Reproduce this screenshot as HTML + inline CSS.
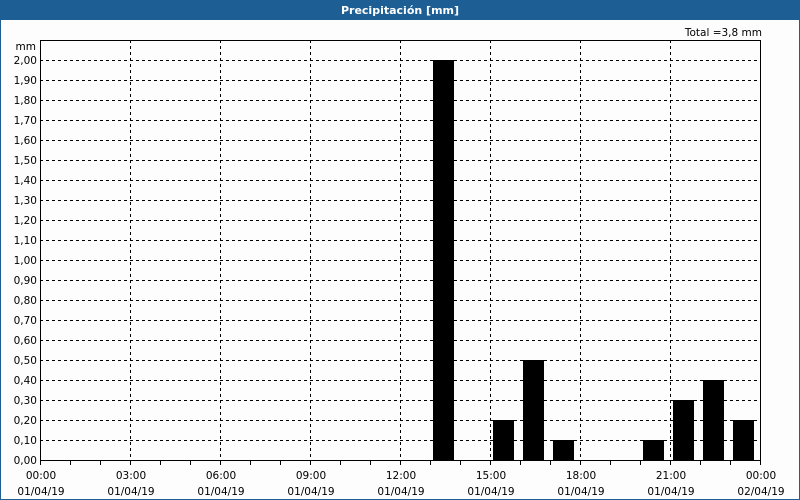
<!DOCTYPE html>
<html><head><style>
body{margin:0;width:800px;height:500px;overflow:hidden;background:#fff}
svg{display:block}
text{font-family:"DejaVu Sans","Liberation Sans",sans-serif;font-size:10.5px;fill:#000}
</style></head><body>
<svg width="800" height="500" xmlns="http://www.w3.org/2000/svg">
<rect x="0" y="0" width="800" height="500" fill="#1d5f95"/>
<rect x="1" y="20" width="798" height="479" fill="#fdfdfd"/>
<text x="400" y="14" text-anchor="middle" style="fill:#fff;font-weight:bold;font-size:11px">Precipitación [mm]</text>
<text x="762" y="36" text-anchor="end">Total =3,8 mm</text>
<text x="36" y="50" text-anchor="end">mm</text>
<g stroke="#000" stroke-dasharray="3,3" stroke-width="1">
<path d="M40 60.5H760M40 80.5H760M40 100.5H760M40 120.5H760M40 140.5H760M40 160.5H760M40 180.5H760M40 200.5H760M40 220.5H760M40 240.5H760M40 260.5H760M40 280.5H760M40 300.5H760M40 320.5H760M40 340.5H760M40 360.5H760M40 380.5H760M40 400.5H760M40 420.5H760M40 440.5H760"/>
<path d="M130.5 40V460M220.5 40V460M310.5 40V460M400.5 40V460M490.5 40V460M580.5 40V460M670.5 40V460"/>
</g>
<g fill="#000">
<rect x="433" y="60" width="21" height="400"/>
<rect x="493" y="420" width="21" height="40"/>
<rect x="523" y="360" width="21" height="100"/>
<rect x="553" y="440" width="21" height="20"/>
<rect x="643" y="440" width="21" height="20"/>
<rect x="673" y="400" width="21" height="60"/>
<rect x="703" y="380" width="21" height="80"/>
<rect x="733" y="420" width="21" height="40"/>
</g>
<rect x="40.5" y="40.5" width="720" height="420" fill="none" stroke="#000"/>
<g stroke="#000">
<path d="M40.5 460V465M70.5 460V465M100.5 460V465M130.5 460V465M160.5 460V465M190.5 460V465M220.5 460V465M250.5 460V465M280.5 460V465M310.5 460V465M340.5 460V465M370.5 460V465M400.5 460V465M430.5 460V465M460.5 460V465M490.5 460V465M520.5 460V465M550.5 460V465M580.5 460V465M610.5 460V465M640.5 460V465M670.5 460V465M700.5 460V465M730.5 460V465M760.5 460V465"/>
</g>
<g text-anchor="end">
<text x="37" y="64">2,00</text><text x="37" y="84">1,90</text><text x="37" y="104">1,80</text><text x="37" y="124">1,70</text><text x="37" y="144">1,60</text><text x="37" y="164">1,50</text><text x="37" y="184">1,40</text><text x="37" y="204">1,30</text><text x="37" y="224">1,20</text><text x="37" y="244">1,10</text><text x="37" y="264">1,00</text><text x="37" y="284">0,90</text><text x="37" y="304">0,80</text><text x="37" y="324">0,70</text><text x="37" y="344">0,60</text><text x="37" y="364">0,50</text><text x="37" y="384">0,40</text><text x="37" y="404">0,30</text><text x="37" y="424">0,20</text><text x="37" y="444">0,10</text><text x="37" y="464">0,00</text>
</g>
<g text-anchor="middle">
<text x="41" y="479">00:00</text><text x="41" y="495">01/04/19</text>
<text x="131" y="479">03:00</text><text x="131" y="495">01/04/19</text>
<text x="221" y="479">06:00</text><text x="221" y="495">01/04/19</text>
<text x="311" y="479">09:00</text><text x="311" y="495">01/04/19</text>
<text x="401" y="479">12:00</text><text x="401" y="495">01/04/19</text>
<text x="491" y="479">15:00</text><text x="491" y="495">01/04/19</text>
<text x="581" y="479">18:00</text><text x="581" y="495">01/04/19</text>
<text x="671" y="479">21:00</text><text x="671" y="495">01/04/19</text>
<text x="761" y="479">00:00</text><text x="761" y="495">02/04/19</text>
</g>
</svg>
</body></html>
